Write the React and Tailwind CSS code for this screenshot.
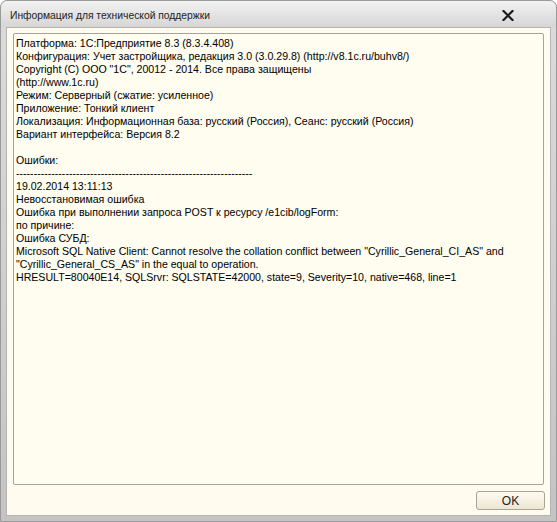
import React from "react";

const lines = [
  "Платформа: 1С:Предприятие 8.3 (8.3.4.408)",
  "Конфигурация: Учет застройщика, редакция 3.0 (3.0.29.8) (http://v8.1c.ru/buhv8/)",
  "Copyright (С) ООО \"1С\", 20012 - 2014. Все права защищены",
  "(http://www.1c.ru)",
  "Режим: Серверный (сжатие: усиленное)",
  "Приложение: Тонкий клиент",
  "Локализация: Информационная база: русский (Россия), Сеанс: русский (Россия)",
  "Вариант интерфейса: Версия 8.2",
  "",
  "Ошибки:",
  "-------------------------------------------------------------------",
  "19.02.2014 13:11:13",
  "Невосстановимая ошибка",
  "Ошибка при выполнении запроса POST к ресурсу /e1cib/logForm:",
  "по причине:",
  "Ошибка СУБД:",
  "Microsoft SQL Native Client: Cannot resolve the collation conflict between \"Cyrillic_General_CI_AS\" and",
  "\"Cyrillic_General_CS_AS\" in the equal to operation.",
  "HRESULT=80040E14, SQLSrvr: SQLSTATE=42000, state=9, Severity=10, native=468, line=1",
];

export default function App() {
  return (
    <div className="w-[557px] h-[522px] flex flex-col bg-gradient-to-b from-[#dcdcdc] to-[#c4c4c4] rounded-t-[7px] border border-[#9a9a9a] font-['Liberation_Sans',Arial,sans-serif] text-[#000]">
      {/* Title bar */}
      <div className="h-[26px] flex items-center justify-between pl-[9px] pr-[42px] shrink-0 bg-gradient-to-b from-[#f2f2f2] to-[#d6d6d6] rounded-t-[7px]">
        <span className="text-[10.3px] text-[#222] pt-[4px]">Информация для технической поддержки</span>
        <svg width="12" height="11" viewBox="0 0 12 11" className="mt-[3px]">
          <path d="M1.5 1 L10.5 10 M10.5 1 L1.5 10" stroke="#1a1a1a" strokeWidth="2.2" strokeLinecap="square" />
        </svg>
      </div>

      {/* Client area */}
      <div className="flex-1 mx-[5px] mb-[5px] flex flex-col bg-[#fffbee] border border-[#b4b4b4] pt-[5px] px-[6px] pb-[5px]">
        <div className="flex-1 bg-[#fffcf0] border border-[#a6a39a] rounded-[2px] px-[2px] pt-[3px] text-[10.6px] leading-[13px] overflow-hidden">
          {lines.map((l, i) => (
            <div key={i} className="whitespace-pre h-[13px]">{l}</div>
          ))}
        </div>
        <div className="flex justify-end pt-[6px]">
          <button className="w-[69px] h-[19px] mr-[-1px] rounded-[3px] border border-[#a9a594] bg-gradient-to-b from-[#fdfaf0] to-[#ede6d4] text-[12px] text-[#222] flex items-center justify-center">
            OK
          </button>
        </div>
      </div>
    </div>
  );
}
